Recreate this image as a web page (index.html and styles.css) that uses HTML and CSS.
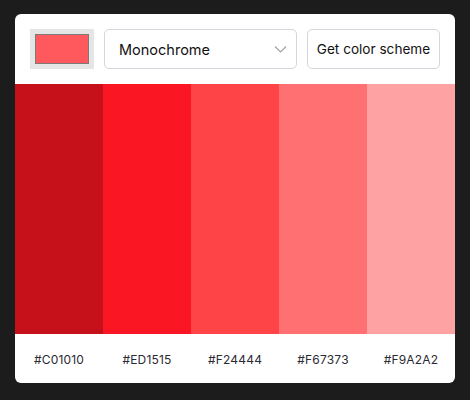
FILE: index.html
```html
<!DOCTYPE html>
<html>
<head>
<meta charset="utf-8">
<link rel="stylesheet" href="styles.css">
</head>
<body>
<div class="card">
  <div class="controls">
    <div class="picker"><div class="swatch"></div></div>
    <div class="select">
      <span>Monochrome</span>
      <svg class="chevron" width="13" height="8" viewBox="0 0 13 8"><path d="M1 1.5l5.5 5.5L12 1.5" fill="none" stroke="#a3a3a8" stroke-width="1.2"/></svg>
    </div>
    <button class="btn">Get color scheme</button>
  </div>
  <div class="stripes">
    <div class="stripe s1"></div>
    <div class="stripe s2"></div>
    <div class="stripe s3"></div>
    <div class="stripe s4"></div>
    <div class="stripe s5"></div>
  </div>
  <div class="labels">
    <span>#C01010</span>
    <span>#ED1515</span>
    <span>#F24444</span>
    <span>#F67373</span>
    <span>#F9A2A2</span>
  </div>
</div>
</body>
</html>
```
FILE: styles.css
```css
html, body {
  margin: 0;
  padding: 0;
  background: #1c1c1c;
  font-family: Inter, "Noto Sans", sans-serif;
}
body {
  padding: 14px 15px;
}
.card {
  width: 440px;
  height: 369px;
  background: #fff;
  border-radius: 6px;
  overflow: hidden;
  display: flex;
  flex-direction: column;
}
.controls {
  display: flex;
  gap: 10px;
  padding: 15px;
  height: 40px;
}
.picker {
  width: 64px;
  height: 40px;
  box-sizing: border-box;
  background: #e5e5e5;
  padding: 5px;
}
.swatch {
  width: 100%;
  height: 100%;
  box-sizing: border-box;
  background: #ff585d;
  border: 1px solid #7a7a7a;
}
.select {
  width: 193px;
  height: 40px;
  box-sizing: border-box;
  border: 1px solid #d3d6dc;
  border-radius: 5px;
  display: flex;
  align-items: center;
  justify-content: space-between;
  padding: 0 9px 0 14px;
  font-size: 14.5px;
  color: #111;
}
.btn {
  width: 133px;
  height: 40px;
  box-sizing: border-box;
  border: 1px solid #d3d6dc;
  border-radius: 5px;
  background: #fff;
  font-family: Inter, "Noto Sans", sans-serif;
  font-size: 13.6px;
  color: #111;
  padding: 0;
}
.stripes {
  display: flex;
  height: 250px;
}
.stripe { flex: 1; }
.s1 { background: #c7111a; }
.s2 { background: #fa1622; }
.s3 { background: #fe4447; }
.s4 { background: #ff7072; }
.s5 { background: #ffa2a3; }
.labels {
  display: flex;
  flex: 1;
  align-items: center;
}
.labels span {
  flex: 1;
  text-align: center;
  font-size: 12px;
  color: #2a2a33;
  letter-spacing: 0.2px;
  padding-top: 1px;
}
```
